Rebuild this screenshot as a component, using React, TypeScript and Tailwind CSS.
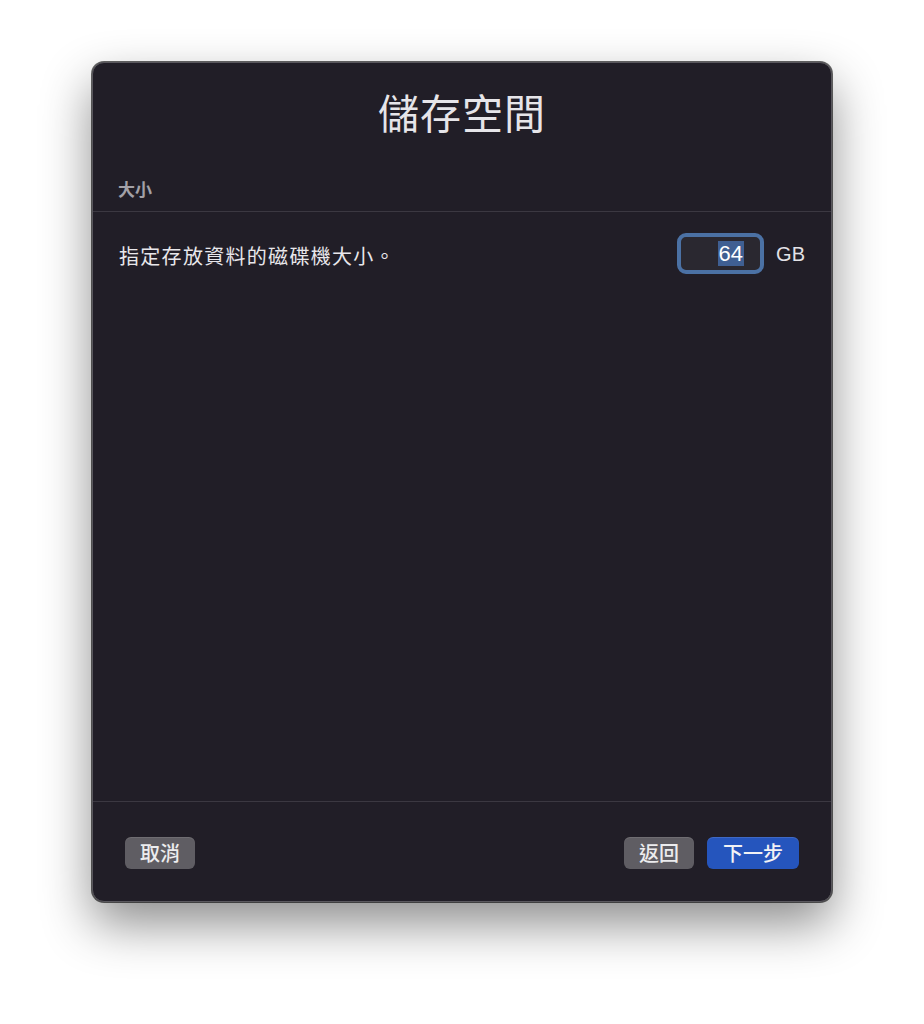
const font = { fontFamily: '"Noto Sans CJK TC", "Noto Sans", sans-serif' };

function Button({ label, primary }: { label: string; primary?: boolean }) {
  return (
    <button
      className={
        primary
          ? "h-[32px] rounded-[6px] bg-[#2555bd] px-[16px] text-[20px] font-medium leading-none text-[#f2f2f5] shadow-[inset_0_1px_0_rgba(255,255,255,0.12)]"
          : "h-[32px] rounded-[6px] bg-[#5f5d63] px-[15px] text-[20px] font-medium leading-none text-[#ececee] shadow-[inset_0_1px_0_rgba(255,255,255,0.1)]"
      }
    >
      {label}
    </button>
  );
}

export default function App() {
  return (
    <div className="min-h-screen w-full bg-white pt-[62px]" style={font}>
      <div className="mx-auto flex h-[840px] w-[740px] flex-col rounded-[12px] border border-[#5a585e] bg-[#211e27] shadow-[0_22px_50px_rgba(0,0,0,0.45),0_0_0_1px_rgba(0,0,0,0.6)]">
        {/* Title */}
        <div className="flex h-[104px] items-center justify-center pb-[7px]">
          <h1 className="text-[41px] font-normal leading-none tracking-[1px] text-[#e6e5e9]">儲存空間</h1>
        </div>

        {/* Section header */}
        <div className="flex h-[45px] items-center border-b border-[#3b3841] px-[25px]">
          <span className="text-[17px] font-semibold text-[#a3a1a7]">大小</span>
        </div>

        {/* Row */}
        <div className="flex items-center justify-between pl-[26px] pr-[26px] pt-[21px]">
          <span className="pt-[4px] text-[20px] leading-none tracking-[1.3px] text-[#e8e7eb]">指定存放資料的磁碟機大小。</span>
          <div className="flex items-center gap-[12px]">
            <div className="flex h-[41px] w-[87px] items-center justify-end rounded-[9px] border-[4px] border-[#4b71a4] bg-[#2a2830] pr-[16px]">
              <span className="bg-[#3f5f92] px-[1px] text-[22px] leading-[25px] text-white" style={{ fontFamily: '"Liberation Sans", Arial, sans-serif' }}>
                64
              </span>
            </div>
            <span className="text-[20px] text-[#e3e2e6]" style={{ fontFamily: '"Liberation Sans", Arial, sans-serif' }}>
              GB
            </span>
          </div>
        </div>

        <div className="flex-1" />

        {/* Footer */}
        <div className="flex h-[100px] items-center justify-between border-t border-[#3b3841] pt-[3px] pl-[32px] pr-[32px]">
          <Button label="取消" />
          <div className="flex items-center gap-[13px]">
            <Button label="返回" />
            <Button label="下一步" primary />
          </div>
        </div>
      </div>
    </div>
  );
}
